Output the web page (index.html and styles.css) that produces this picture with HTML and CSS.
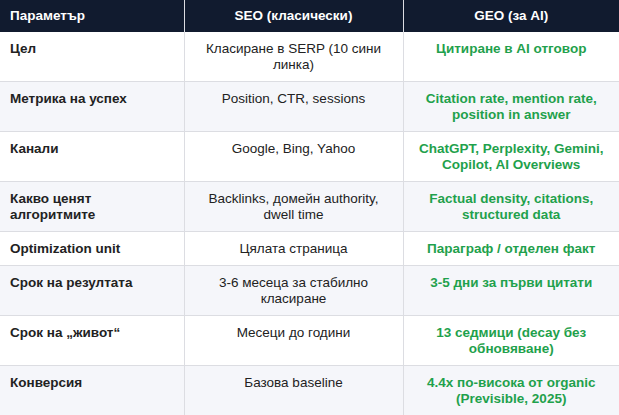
FILE: index.html
```html
<!DOCTYPE html>
<html lang="bg">
<head>
<meta charset="utf-8">
<link rel="stylesheet" href="styles.css">
</head>
<body>
<table class="cmp">
  <colgroup>
    <col class="c1"><col class="c2"><col class="c3">
  </colgroup>
  <thead>
    <tr><th class="left">Параметър</th><th>SEO (класически)</th><th>GEO (за AI)</th></tr>
  </thead>
  <tbody>
    <tr><td class="label">Цел</td><td class="seo">Класиране в SERP (10 сини линка)</td><td class="geo">Цитиране в AI отговор</td></tr>
    <tr><td class="label">Метрика на успех</td><td class="seo">Position, CTR, sessions</td><td class="geo">Citation rate, mention rate, position in answer</td></tr>
    <tr><td class="label">Канали</td><td class="seo">Google, Bing, Yahoo</td><td class="geo">ChatGPT, Perplexity, Gemini, Copilot, AI Overviews</td></tr>
    <tr><td class="label">Какво ценят алгоритмите</td><td class="seo">Backlinks, домейн authority, dwell time</td><td class="geo">Factual density, citations, structured data</td></tr>
    <tr><td class="label">Optimization unit</td><td class="seo">Цялата страница</td><td class="geo">Параграф / отделен факт</td></tr>
    <tr><td class="label">Срок на резултата</td><td class="seo">3-6 месеца за стабилно класиране</td><td class="geo">3-5 дни за първи цитати</td></tr>
    <tr><td class="label">Срок на „живот“</td><td class="seo">Месеци до години</td><td class="geo">13 седмици (decay без обновяване)</td></tr>
    <tr><td class="label">Конверсия</td><td class="seo">Базова baseline</td><td class="geo">4.4x по-висока от organic (Previsible, 2025)</td></tr>
  </tbody>
</table>
</body>
</html>
```
FILE: styles.css
```css
html, body {
  margin: 0;
  padding: 0;
  background: #ffffff;
}
body {
  font-family: "Liberation Sans", Arial, sans-serif;
  font-size: 13.5px;
  color: #222222;
}
.cmp {
  width: 619px;
  border-collapse: collapse;
  table-layout: fixed;
}
.c1 { width: 184px; }
.c2 { width: 219px; }
.c3 { width: 216px; }
.cmp th {
  background: #111b2f;
  color: #ffffff;
  font-weight: bold;
  line-height: 16px;
  padding: 8px 10px;
  text-align: center;
  border-left: 1px solid #dcdde2;
}
.cmp th.left {
  text-align: left;
  border-left: none;
}
.cmp td {
  line-height: 16px;
  padding: 9px 10px 8px;
  vertical-align: top;
  border-bottom: 1px solid #dcdde2;
  border-left: 1px solid #dcdde2;
}
.cmp td.label {
  font-weight: bold;
  border-left: none;
  text-align: left;
}
.cmp td.seo {
  text-align: center;
}
.cmp td.geo {
  text-align: center;
  font-weight: bold;
  color: #1fa14c;
}
.cmp tbody tr:nth-child(even) td {
  background: #f5f6fa;
}
```
